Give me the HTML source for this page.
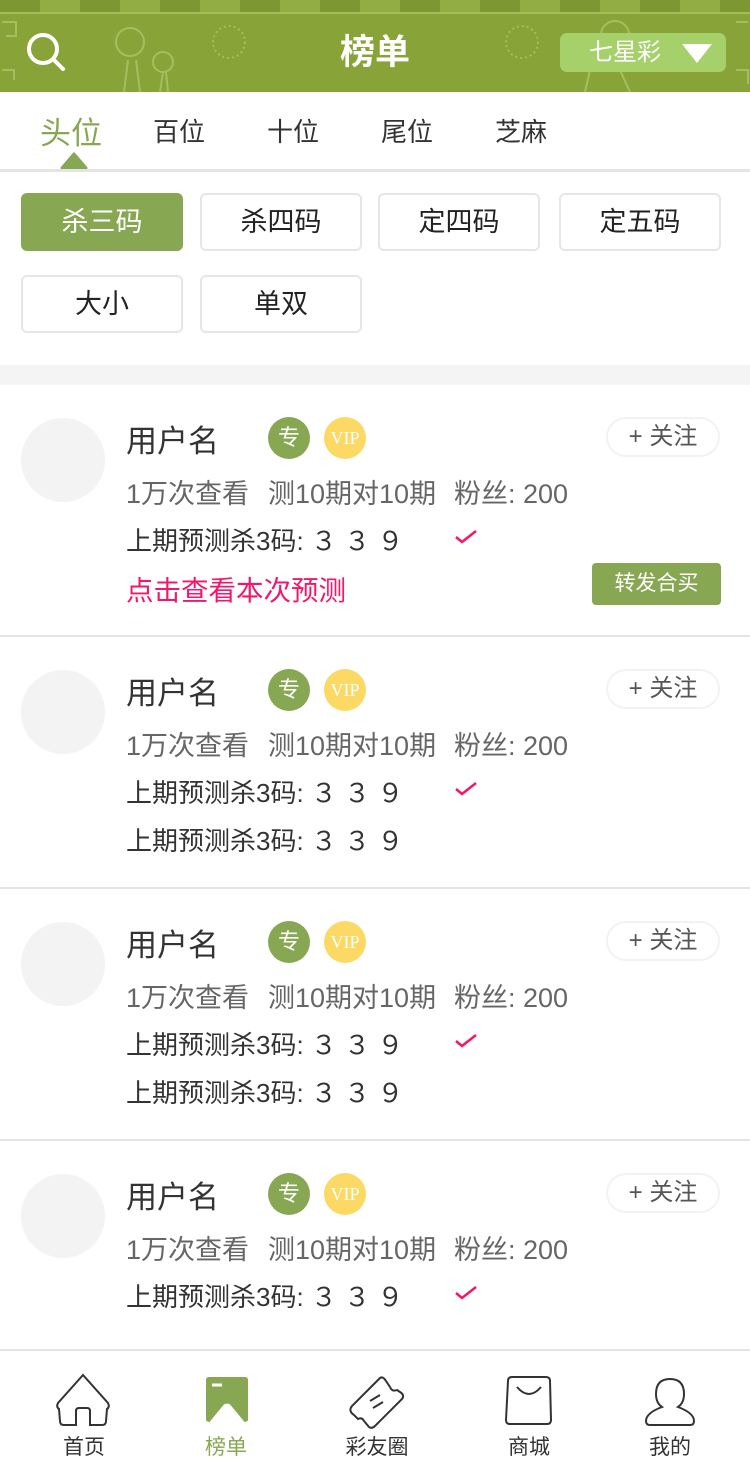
<!DOCTYPE html>
<html><head><meta charset="utf-8"><style>
*{margin:0;padding:0;box-sizing:border-box}
body{width:750px;height:1465px;overflow:hidden;background:#fff;font-family:"Liberation Sans","Noto Sans CJK SC",sans-serif;position:relative}
.abs{position:absolute}
.hdr{left:0;top:0;width:750px;height:92px;background:#88a337}
.curt{left:0;top:0;width:750px;height:14px;background:repeating-linear-gradient(90deg,#7d9732 0 40px,#93ad45 40px 80px);border-bottom:2px solid #a4bd58}
.title{left:0;width:750px;top:24px;text-align:center;color:#fff;font-size:35px;font-weight:bold}
.sel{left:560px;top:33px;width:166px;height:39px;background:#a6d06a;border-radius:7px;color:#fff;font-size:24px;line-height:39px;padding-left:29px}
.tabs span{position:absolute;top:112px;font-size:26px;color:#333}
.btn{position:absolute;width:162px;height:58px;border:2px solid #e6e6e6;border-radius:6px;font-size:27px;color:#222;text-align:center;line-height:54px}
.card{position:absolute;left:0;width:750px;height:252px;border-bottom:2px solid #e4e4e4}
.av{left:21px;top:33px;width:84px;height:84px;border-radius:50%;background:#f3f3f3}
.name{left:126px;top:31px;font-size:31px;color:#333}
.b1{left:268px;top:32px;width:42px;height:42px;border-radius:50%;background:#88a752;color:#fff;font-size:22px;text-align:center;line-height:42px}
.b2{left:324px;top:32px;width:42px;height:42px;border-radius:50%;background:#fcd965;color:#fff;font-size:18px;text-align:center;line-height:42px;font-family:"Liberation Serif",serif}
.fol{left:606px;top:32px;width:114px;height:40px;border:2px solid #f2f2f2;border-radius:20px;font-size:24px;color:#555;text-align:center;line-height:36px}
.l{font-size:27px;white-space:nowrap}
.d{font-size:26px}
.g{color:#666}.d{color:#333}
.chk{left:455px;width:22px;height:14px}
.red{left:126px;top:183px;font-size:27.5px;color:#f5156b}
.zf{left:592px;top:178px;width:129px;height:42px;background:#88a752;border-radius:4px;color:#fff;font-size:21px;text-align:center;line-height:42px}
.nav{left:0;top:1349px;width:750px;height:116px;border-top:2px solid #e4e4e4;background:#fff}
.nl{position:absolute;top:80px;width:150px;text-align:center;font-size:21px;color:#333}
</style></head><body>
<div class="abs hdr"></div>
<div class="abs curt"></div>
<svg class="abs" style="left:0;top:0" width="750" height="92">
<g fill="none" stroke="#b9d07a" stroke-width="2" opacity="0.6">
<circle cx="130" cy="42" r="14"/><circle cx="163" cy="62" r="10"/><path d="M128 60 L124 92 M136 60 L140 92 M163 72 L160 92 M166 72 L168 92"/>
<circle cx="229" cy="42" r="16" stroke-dasharray="2 3"/><circle cx="522" cy="42" r="16" stroke-dasharray="2 3"/>
<circle cx="615" cy="35" r="14"/><path d="M585 92 L590 70 M620 70 L630 92"/>
<path d="M2 22 h14 v14 h-10 M2 70 h12 v10 M736 22 h12 M736 70 h12 v14"/>
</g>
<circle cx="43" cy="49" r="14" fill="none" stroke="#fff" stroke-width="4"/><path d="M53 59 L63 69" stroke="#fff" stroke-width="4" stroke-linecap="round"/>
</svg>
<div class="abs title">榜单</div>
<div class="abs sel">七星彩<svg style="position:absolute;left:122px;top:11px" width="30" height="19"><path d="M0 0 H30 L15 19Z" fill="#fff"/></svg></div>
<div class="tabs">
<span style="left:40px;top:108px;font-size:31px;color:#88a752">头位</span>
<span style="left:153px">百位</span><span style="left:267px">十位</span><span style="left:381px">尾位</span><span style="left:495px">芝麻</span>
</div>
<svg class="abs" style="left:59px;top:151px" width="30" height="18"><path d="M3 17 L15 3 L27 17Z" fill="#88a752" stroke="#88a752" stroke-width="3" stroke-linejoin="round"/></svg>
<div class="abs" style="left:0;top:169px;width:750px;height:3px;background:#e4e4e4"></div>
<div class="btn" style="left:21px;top:193px;background:#88a752;border-color:#88a752;color:#fff">杀三码</div>
<div class="btn" style="left:200px;top:193px">杀四码</div>
<div class="btn" style="left:378px;top:193px">定四码</div>
<div class="btn" style="left:559px;top:193px">定五码</div>
<div class="btn" style="left:21px;top:275px">大小</div>
<div class="btn" style="left:200px;top:275px">单双</div>
<div class="abs" style="left:0;top:365px;width:750px;height:20px;background:#f4f4f4"></div>

<div class="card" style="top:385px">
<div class="abs av"></div><div class="abs name">用户名</div><div class="abs b1">专</div><div class="abs b2">VIP</div><div class="abs fol">+ 关注</div>
<div class="abs l g" style="left:126px;top:87px">1万次查看</div><div class="abs l g" style="left:268px;top:87px">测10期对10期</div><div class="abs l g" style="left:454px;top:87px">粉丝: 200</div>
<div class="abs l d" style="left:126px;top:136px">上期预测杀3码: ３ ３ ９</div>
<svg class="abs chk" style="top:145px"><path d="M1 7 L7 12 L21 1" fill="none" stroke="#f5156b" stroke-width="2.5"/></svg>
<div class="abs red">点击查看本次预测</div><div class="abs zf">转发合买</div>
</div>
<div class="card" style="top:637px">
<div class="abs av"></div><div class="abs name">用户名</div><div class="abs b1">专</div><div class="abs b2">VIP</div><div class="abs fol">+ 关注</div>
<div class="abs l g" style="left:126px;top:87px">1万次查看</div><div class="abs l g" style="left:268px;top:87px">测10期对10期</div><div class="abs l g" style="left:454px;top:87px">粉丝: 200</div>
<div class="abs l d" style="left:126px;top:136px">上期预测杀3码: ３ ３ ９</div>
<svg class="abs chk" style="top:145px"><path d="M1 7 L7 12 L21 1" fill="none" stroke="#f5156b" stroke-width="2.5"/></svg>
<div class="abs l d" style="left:126px;top:184px">上期预测杀3码: ３ ３ ９</div>
</div>
<div class="card" style="top:889px">
<div class="abs av"></div><div class="abs name">用户名</div><div class="abs b1">专</div><div class="abs b2">VIP</div><div class="abs fol">+ 关注</div>
<div class="abs l g" style="left:126px;top:87px">1万次查看</div><div class="abs l g" style="left:268px;top:87px">测10期对10期</div><div class="abs l g" style="left:454px;top:87px">粉丝: 200</div>
<div class="abs l d" style="left:126px;top:136px">上期预测杀3码: ３ ３ ９</div>
<svg class="abs chk" style="top:145px"><path d="M1 7 L7 12 L21 1" fill="none" stroke="#f5156b" stroke-width="2.5"/></svg>
<div class="abs l d" style="left:126px;top:184px">上期预测杀3码: ３ ３ ９</div>
</div>
<div class="card" style="top:1141px;border:none">
<div class="abs av"></div><div class="abs name">用户名</div><div class="abs b1">专</div><div class="abs b2">VIP</div><div class="abs fol">+ 关注</div>
<div class="abs l g" style="left:126px;top:87px">1万次查看</div><div class="abs l g" style="left:268px;top:87px">测10期对10期</div><div class="abs l g" style="left:454px;top:87px">粉丝: 200</div>
<div class="abs l d" style="left:126px;top:136px">上期预测杀3码: ３ ３ ９</div>
<svg class="abs chk" style="top:145px"><path d="M1 7 L7 12 L21 1" fill="none" stroke="#f5156b" stroke-width="2.5"/></svg>
</div>

<div class="abs nav">
<svg class="abs" style="left:0;top:0" width="750" height="80" fill="none" stroke="#333" stroke-width="2">
<path d="M83 24 L58 52 Q56 56 59 58 L60 70 Q60 74 64 74 L76 74 L76 60 Q76 57 79 57 L87 57 Q90 57 90 60 L90 74 L102 74 Q106 74 106 70 L107 58 Q110 56 108 52 Z"/>
<path d="M207 29 Q207 27 209 27 L245 27 Q247 27 247 29 L247 69 L245 70 L231 53 Q227 50 223 53 L209 70 L207 69 Z" fill="#88a752" stroke="#88a752"/>
<path d="M212 34 H222" stroke="#fff" stroke-width="3"/>
<path d="M380 27 L352 55 Q348 60 354 64 L358 68 Q362 66 364 70 L369 76 Q372 78 375 75 L402 48 Q405 44 400 41 L397 39 Q392 41 390 36 L386 30 Q383 25 380 27 Z"/>
<path d="M370 50 L380 44 M373 57 L383 51"/>
<path d="M508 30 Q508 26 512 26 L546 26 Q550 26 550 30 L551 69 Q551 73 547 73 L510 73 Q506 73 506 69 Z"/><path d="M517 36 Q529 50 541 36"/>
<path d="M670 28 Q656 28 656 43 Q656 52 662 56 Q646 62 646 70 Q646 74 650 74 L690 74 Q694 74 694 70 Q694 62 678 56 Q684 52 684 43 Q684 28 670 28 Z"/>
</svg>
<div class="nl" style="left:9px">首页</div>
<div class="nl" style="left:151px;color:#88a752">榜单</div>
<div class="nl" style="left:302px">彩友圈</div>
<div class="nl" style="left:454px">商城</div>
<div class="nl" style="left:595px">我的</div>
</div>
</body></html>
